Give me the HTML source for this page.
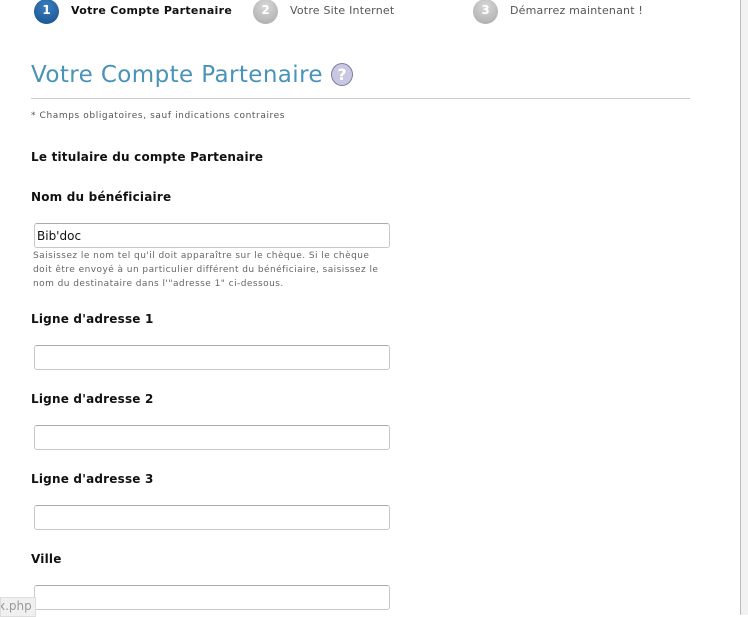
<!DOCTYPE html>
<html><head><meta charset="utf-8"><style>
html,body{margin:0;padding:0;width:748px;height:615px;overflow:hidden;background:#fff;font-family:"DejaVu Sans","Liberation Sans",sans-serif;}
.abs{position:absolute;white-space:nowrap}
.c{position:absolute;width:25px;height:25px;border-radius:50%;color:#fff;font-size:12px;font-weight:bold;text-align:center;line-height:23px;top:0}
.lbl{position:absolute;left:31px;font-size:12px;font-weight:bold;color:#111;letter-spacing:0.2px}
.in{position:absolute;left:34px;width:354px;height:23px;border:1px solid #c8c8c8;border-top-color:#aaa;border-radius:3px;background:#fff}
</style></head><body>
<div class="abs" style="left:740px;top:0;width:1px;height:615px;background:#bbb"></div>
<div class="abs" style="left:741px;top:0;width:7px;height:615px;background:#f2f2f2"></div>
<div class="c" style="left:34px;background:radial-gradient(circle at 50% 30%,#3a7fc0,#174f8a);top:-1px">1</div>
<div class="abs" style="left:71px;top:4px;font-size:11px;font-weight:bold;color:#111;letter-spacing:0.3px">Votre Compte Partenaire</div>
<div class="c" style="left:253px;background:radial-gradient(circle at 50% 30%,#d8d8d8,#a8a8a8);top:-1px">2</div>
<div class="abs" style="left:290px;top:4px;font-size:11px;color:#555;letter-spacing:0.2px">Votre Site Internet</div>
<div class="c" style="left:473px;background:radial-gradient(circle at 50% 30%,#d8d8d8,#a8a8a8);top:-1px">3</div>
<div class="abs" style="left:510px;top:4px;font-size:11px;color:#555;letter-spacing:0.2px">Démarrez maintenant !</div>
<div class="abs" style="left:31px;top:62px;font-size:23px;color:#4a93b8;letter-spacing:0.4px">Votre Compte Partenaire</div>
<div class="abs" style="left:331px;top:63px;width:22px;height:23px;border-radius:50%;background:#c8c8e0;border:1px solid #7a7aa8;box-sizing:border-box;color:#fff;font-size:16px;font-weight:bold;text-align:center;line-height:21px">?</div>
<div class="abs" style="left:31px;top:98px;width:659px;height:1px;background:#ccc"></div>
<div class="abs" style="left:31px;top:111px;font-size:9px;color:#555;letter-spacing:0.6px">* Champs obligatoires, sauf indications contraires</div>
<div class="lbl" style="top:150px">Le titulaire du compte Partenaire</div>
<div class="lbl" style="top:190px">Nom du bénéficiaire</div>
<div class="in" style="top:223px"><span style="position:absolute;left:2px;top:5px;font-size:12px;color:#111">Bib'doc</span></div>
<div class="abs" style="left:33px;top:249px;font-size:9px;color:#666;line-height:14px;letter-spacing:0.45px">Saisissez le nom tel qu'il doit apparaître sur le chèque. Si le chèque<br>doit être envoyé à un particulier différent du bénéficiaire, saisissez le<br>nom du destinataire dans l'"adresse 1" ci-dessous.</div>
<div class="lbl" style="top:312px">Ligne d'adresse 1</div>
<div class="in" style="top:345px"></div>
<div class="lbl" style="top:392px">Ligne d'adresse 2</div>
<div class="in" style="top:425px"></div>
<div class="lbl" style="top:472px">Ligne d'adresse 3</div>
<div class="in" style="top:505px"></div>
<div class="lbl" style="top:552px">Ville</div>
<div class="in" style="top:585px"></div>
<div class="abs" style="left:0;top:597px;width:34px;height:18px;background:#f0f0f0;border:1px solid #ddd;color:#999;font-size:12px;line-height:17px;overflow:hidden;text-indent:-3px">x.php</div>
</body></html>
